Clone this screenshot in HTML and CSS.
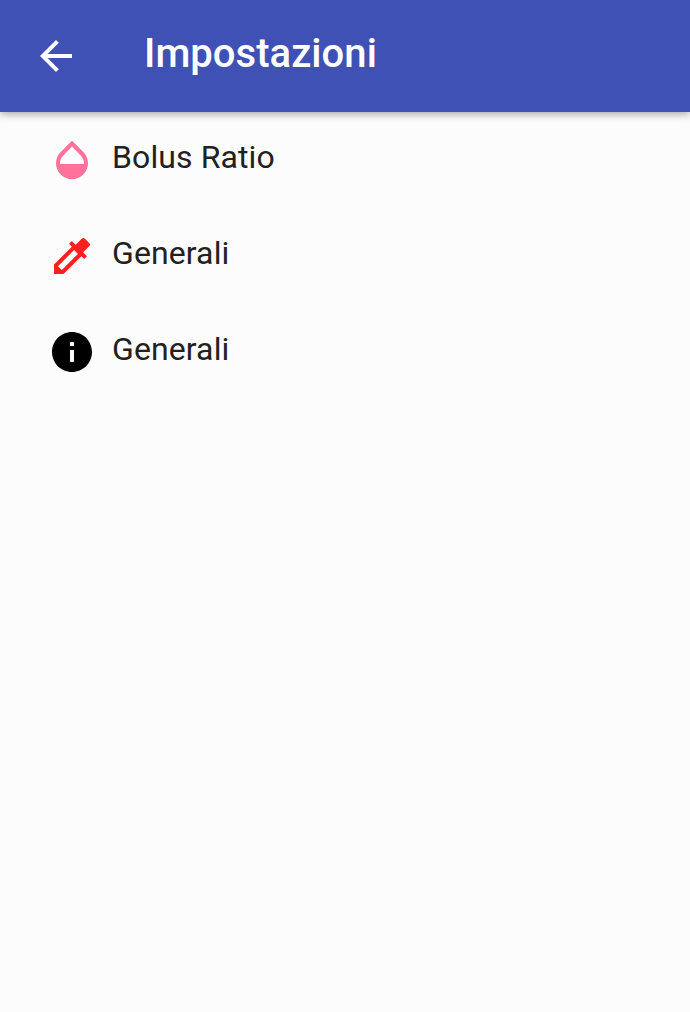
FILE: index.html
```html
<!DOCTYPE html>
<html lang="it">
<head>
<meta charset="utf-8">
<title>Impostazioni</title>
<link rel="stylesheet" href="styles.css">
</head>
<body>
<header class="toolbar">
  <svg class="back" viewBox="0 0 24 24"><path d="M20 11H7.83l5.59-5.59L12 4l-8 8 8 8 1.41-1.41L7.83 13H20v-2z"/></svg>
  <h1 class="title">Impostazioni</h1>
</header>
<main class="list">
  <div class="item">
    <svg class="icon pink" viewBox="0 0 24 24"><path d="M17.66 8L12 2.35 6.34 8C4.78 9.56 4 11.64 4 13.64s.78 4.11 2.34 5.67 3.61 2.35 5.66 2.35 4.1-.79 5.66-2.35S20 15.64 20 13.64 19.22 9.56 17.66 8zM6 14c.01-2 .62-3.27 1.76-4.4L12 5.27l4.24 4.38C17.38 10.77 17.99 12 18 14H6z"/></svg>
    <span class="label">Bolus Ratio</span>
  </div>
  <div class="item">
    <svg class="icon red" viewBox="0 0 24 24"><path d="M20.71 5.63l-2.34-2.34c-.39-.39-1.02-.39-1.41 0l-3.12 3.12-1.93-1.91-1.41 1.41 1.42 1.42L3 16.25V21h4.75l8.92-8.92 1.42 1.42 1.41-1.41-1.92-1.92 3.12-3.12c.4-.4.4-1.03.01-1.42zM6.92 19L5 17.08l8.06-8.06 1.92 1.92L6.92 19z"/></svg>
    <span class="label">Generali</span>
  </div>
  <div class="item">
    <svg class="icon" viewBox="0 0 24 24"><path d="M12 2C6.48 2 2 6.48 2 12s4.48 10 10 10 10-4.48 10-10S17.52 2 12 2zm1 15h-2v-6h2v6zm0-8h-2V7h2v2z"/></svg>
    <span class="label">Generali</span>
  </div>
</main>
</body>
</html>
```
FILE: styles.css
```css
body {
  margin: 0;
  min-height: 100vh;
  background: #fcfcfc;
  font-family: Roboto, sans-serif;
}

.toolbar {
  display: flex;
  align-items: center;
  box-sizing: border-box;
  height: 112px;
  padding-left: 32px;
  background: #3f51b5;
  box-shadow: 0 2px 8px rgba(0, 0, 0, 0.35);
}

.back {
  width: 48px;
  height: 48px;
  fill: #fff;
}

.title {
  margin: 0 0 4px 64px;
  font-size: 40px;
  line-height: 48px;
  font-weight: 500;
  letter-spacing: 0.05px;
  color: #fff;
}

.item {
  display: flex;
  align-items: center;
  height: 96px;
  padding-left: 48px;
}

.icon {
  width: 48px;
  height: 48px;
  fill: #000;
}

.pink {
  fill: #ff7299;
}

.red {
  fill: #ff1f1f;
}

.label {
  margin: 0 0 6px 16px;
  font-size: 32px;
  line-height: 40px;
  letter-spacing: 0.1px;
  color: #212121;
}
```
